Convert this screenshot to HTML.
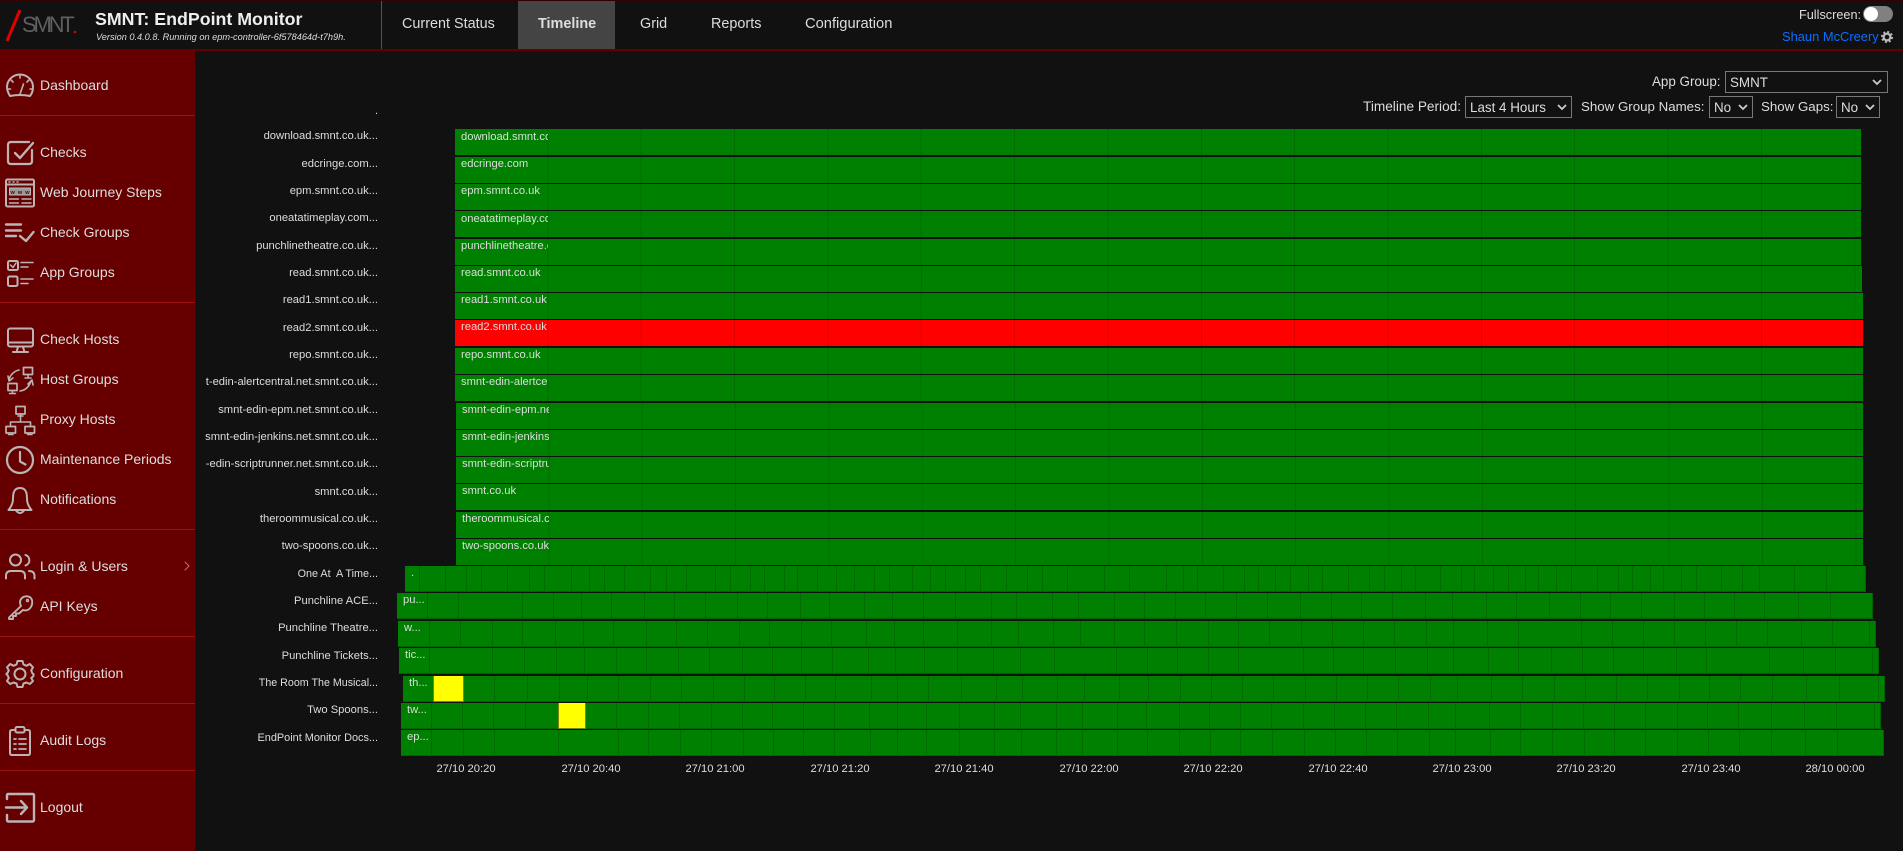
<!DOCTYPE html>
<html lang="en"><head><meta charset="utf-8"><title>SMNT: EndPoint Monitor</title>
<style>
*{box-sizing:border-box}
html,body{margin:0;padding:0;width:1903px;height:851px;overflow:hidden;background:#111;font-family:"Liberation Sans",sans-serif;color:#ddd}
.a{position:absolute;white-space:nowrap}
#hdr{position:absolute;left:0;top:0;width:1903px;height:51px;background:#111;border-top:1px solid #300;border-bottom:2px solid #600}
#side{position:absolute;left:0;top:51px;width:195px;height:800px;background:#600}
.hr{position:absolute;left:0;width:195px;height:1px;background:#9c1212}
.m{position:absolute;left:40px;font-size:14px;line-height:20px;color:#ddd;white-space:nowrap}
.nav{position:absolute;top:14px;font-size:14.4px;line-height:20px;color:#ddd;white-space:nowrap}
.l{position:absolute;left:205px;width:173px;height:16px;overflow:hidden;text-align:right;font-size:11.2px;line-height:16px;color:#ddd;white-space:pre;direction:rtl}
.l span{direction:ltr;unicode-bidi:embed}
.gl{font-size:10.9px}
.r{position:absolute;height:26px;overflow:hidden;background-color:#008000;font-size:11.2px;line-height:16px;color:#ddd;white-space:nowrap}
.t{background-image:repeating-linear-gradient(90deg,#008000 0 92.35px,#006f00 92.35px 93.35px)}
.g{border-right:1px solid #006300;border-bottom:1px solid #006300}
.r b{font-weight:400;position:absolute;left:6px;top:-1px;height:16px;overflow:hidden;display:block}
.y{position:absolute;height:26px;background:#ff0;border:1px solid #7a8a00;border-top:0}
.x{position:absolute;top:761px;width:80px;text-align:center;font-size:11.2px;line-height:16px;color:#ddd}
.lb{position:absolute;font-size:13.3px;line-height:18px;color:#ddd;white-space:nowrap}
select{position:absolute;appearance:none;-webkit-appearance:none;background:#111;color:#ddd;border:1px solid #777;border-radius:0;font:13.4px "Liberation Sans",sans-serif;padding:0 0 0 4px;margin:0}
</style></head><body>

<div id="hdr"></div>
<div class="a" style="left:22px;top:12px;font-size:22px;line-height:26px;color:#5e5e5e;letter-spacing:-3.2px">SMNT</div>
<svg class="a" style="left:0;top:0" width="90" height="50"><line x1="7" y1="41" x2="20" y2="10" stroke="#e00000" stroke-width="3"/><circle cx="75" cy="32" r="1.3" fill="#e00000"/></svg>
<div class="a" style="left:95px;top:8px;font-size:17.8px;line-height:22px;font-weight:700;color:#eee">SMNT: EndPoint Monitor</div>
<div class="a" style="left:96px;top:30px;font-size:9.2px;line-height:14px;font-style:italic;color:#ddd">Version 0.4.0.8. Running on epm-controller-6f578464d-t7h9h.</div>
<div class="a" style="left:381px;top:1px;width:1px;height:48px;background:#555"></div>
<div class="a" style="left:518px;top:1px;width:97px;height:48px;background:#444"></div>
<div class="nav" style="left:402px">Current Status</div>
<div class="nav" style="left:538px;font-weight:700">Timeline</div>
<div class="nav" style="left:640px">Grid</div>
<div class="nav" style="left:711px">Reports</div>
<div class="nav" style="left:805px;font-size:14.7px">Configuration</div>
<div class="a" style="left:1799px;top:7px;font-size:12.7px;line-height:16px;color:#ddd">Fullscreen:</div>
<div class="a" style="left:1863px;top:6px;width:30px;height:16px;border-radius:8px;background:#808080"></div>
<div class="a" style="left:1864px;top:7px;width:14px;height:14px;border-radius:7px;background:#fff"></div>
<div class="a" style="left:1782px;top:28px;font-size:12.9px;line-height:17px;color:#0d6efd">Shaun McCreery</div>
<svg class="a" style="left:1881px;top:31px" width="12" height="12" viewBox="0 0 12 12"><circle cx="6" cy="6" r="3.4" fill="none" stroke="#bbb" stroke-width="2.2"/><circle cx="6" cy="6" r="5" fill="none" stroke="#bbb" stroke-width="2" stroke-dasharray="2 1.93"/></svg>

<div id="side"></div>
<div class="hr" style="top:115px"></div><div class="hr" style="top:302px"></div><div class="hr" style="top:529px"></div><div class="hr" style="top:636px"></div><div class="hr" style="top:703px"></div><div class="hr" style="top:770px"></div>
<div class="m" style="top:75px">Dashboard</div>
<div class="m" style="top:142px">Checks</div>
<div class="m" style="top:182px">Web Journey Steps</div>
<div class="m" style="top:222px">Check Groups</div>
<div class="m" style="top:262px">App Groups</div>
<div class="m" style="top:329px">Check Hosts</div>
<div class="m" style="top:369px">Host Groups</div>
<div class="m" style="top:409px">Proxy Hosts</div>
<div class="m" style="top:449px">Maintenance Periods</div>
<div class="m" style="top:489px">Notifications</div>
<div class="m" style="top:556px">Login &amp; Users</div>
<div class="m" style="top:596px">API Keys</div>
<div class="m" style="top:663px">Configuration</div>
<div class="m" style="top:730px">Audit Logs</div>
<div class="m" style="top:797px">Logout</div>

<svg class="a" style="left:0;top:0" width="195" height="851" fill="none" stroke="#bcb4b4" stroke-width="2" stroke-linecap="round" stroke-linejoin="round">
<path d="M10 96C7.500 92 7 89 7 87A13 12.500 0 0 1 33 87C33 90 32.500 93 30 96Q20 94 10 96Z"/><path d="M20 94L23.500 84M20 75.500V78M11 80L13 82M29 80L27 82M8 89H10.500M30 89H32.500" stroke-width="1.600"/>
<path d="M29 142H11Q8 142 8 145V161Q8 164 11 164H29Q32 164 32 161V150" stroke-width="2.200"/><path d="M15 153L20 158L33 143" stroke-width="2.400"/>
<rect x="6" y="179.500" width="28" height="27" rx="1.500"/><path d="M6 184.500H34" stroke-width="2"/><rect x="9.500" y="188" width="21" height="7" stroke-width="1" fill="#999"/><path d="M9.500 199H18.500M22 199H31M9.500 203H18.500M22 203H31" stroke-width="1.400"/><path d="M9 182H10M13 182H14M17 182H18" stroke-width="1.400"/>
<path d="M6 224.500H21M6 230.500H21M6 236H16" stroke-width="2.400"/><path d="M20 236L26 241L33.500 232" stroke-width="2.400"/>
<rect x="8" y="261" width="10" height="9" rx="1.500"/><path d="M10.500 265L13 267.500L16 263" stroke-width="1.500"/><path d="M21 262.500H33M21 267H28M21 279H33M21 283.500H28" stroke-width="1.600"/><rect x="8" y="276.500" width="9.500" height="9.500" rx="1.500"/>
<rect x="8" y="328.500" width="25" height="18" rx="2"/><path d="M8 342.500H33M18 347L16.500 352M23 347L24.500 352M13 352H28"/>
<rect x="23.500" y="367.500" width="9" height="7" stroke-width="1.700"/><path d="M28 375V378M25 378H31" stroke-width="1.500"/><rect x="8" y="383.500" width="9" height="7" stroke-width="1.700"/><path d="M12.500 391V393.500M9.500 393.500H15.500" stroke-width="1.500"/><path d="M9 380Q11 372 19 370M8 376L9 381L13 378M20 391Q28 390 31 381M28 384L32 380L33 385" stroke-width="1.600"/>
<rect x="16" y="406.500" width="9" height="7.500" stroke-width="1.700"/><path d="M20.500 414V422M10.500 426V422H30.500V426M18 416H23" stroke-width="1.600"/><rect x="6" y="426.500" width="9.500" height="6.500" stroke-width="1.700"/><rect x="25" y="426.500" width="9.500" height="6.500" stroke-width="1.700"/><path d="M8.500 434.500H13M27.500 434.500H32" stroke-width="1.500"/>
<circle cx="20" cy="460" r="13" stroke-width="2.200"/><path d="M20 452V461.500L25.500 464.500" stroke-width="2.200"/>
<path d="M20 488C13 488 13 495 13 499C13 504 11 507 8.500 510H31.500C29 507 27 504 27 499C27 495 27 488 20 488Z"/><path d="M16 510.500Q20 515.500 24 510.500"/>
<circle cx="15.500" cy="560" r="5.500"/><path d="M25.500 555A5.500 5.500 0 0 1 25.500 565.500M6 578.500V576Q6 571 11 571H20Q25 571 25 576V578.500M29 571Q34.500 571 34.500 576V578.500"/>
<path d="M21 606L9 617.500V619H13V616H16V613.500H19L23 610C30 612 33 605 32 600C30.500 595.500 24 595 21 599C19.500 601.500 20 604 21 606Z" stroke-width="1.900"/><circle cx="27.500" cy="600.500" r="1" stroke-width="1.400"/>
<circle cx="20" cy="674" r="5.500"/><path d="M17.500 661H22.500L23.500 664.500L26.500 665.800L29.800 664L33 667.300L31.200 670.500L32.500 673.500L33.500 674V676L32.500 677L31.200 678L33 681L29.800 684L26.500 682.500L23.500 683.500L22.500 687H17.500L16.500 683.500L13.500 682.500L10.200 684L7 681L8.800 678L7.500 675L6.500 674.500V673.500L7.500 673L8.800 670.500L7 667.300L10.200 664L13.500 665.800L16.500 664.500Z"/>
<path d="M15 730H12Q10 730 10 732V753Q10 755 12 755H28Q30 755 30 753V732Q30 730 28 730H25"/><rect x="15.500" y="727" width="9" height="5.500" rx="1.500"/><path d="M14 739H16M19 739H26M14 744H16M19 744H26M14 749H16M19 749H26" stroke-width="1.700"/>
<path d="M7 799V795.500Q7 794 8.500 794H32.500Q34 794 34 795.500V820Q34 821.500 32.500 821.500H8.500Q7 821.500 7 820V815" stroke-width="2.400"/><path d="M6 807.500H26M21 801L27 807.500L21 814" stroke-width="2.400"/>
<path d="M185 562L189 566L185 570" stroke="#c07070" stroke-width="1"/>
</svg>
<svg class="a" style="left:0;top:0" width="195" height="210"><text x="10.500" y="194" font-family="Liberation Sans" font-size="5.500" font-weight="700" fill="#500" textLength="19">www</text></svg>

<div class="lb" style="left:1652px;top:73px;font-size:13.4px">App Group:</div>
<select style="left:1725px;top:71px;width:163px;height:22px"><option>SMNT</option></select>
<div class="lb" style="left:1363px;top:98px;font-size:13.65px">Timeline Period:</div>
<select style="left:1465px;top:96px;width:107px;height:22px"><option>Last 4 Hours</option></select>
<div class="lb" style="left:1581px;top:98px">Show Group Names:</div>
<select style="left:1709px;top:96px;width:44px;height:22px"><option>No</option></select>
<div class="lb" style="left:1761px;top:98px">Show Gaps:</div>
<select style="left:1836px;top:96px;width:44px;height:22px"><option>No</option></select>
<svg class="a" style="left:0;top:0;pointer-events:none" width="1903" height="130" fill="none" stroke="#ccc" stroke-width="1.800"><path d="M1873 80L1877 84L1881 80M1558 105L1562 109L1566 105M1739 105L1743 109L1747 105M1866 105L1870 109L1874 105"/></svg>

<div class="a" style="left:375px;top:104px;font-size:11px;line-height:14px">.</div>
<div class="l" style="top:128px"><span>download.smnt.co.uk...</span></div>
<div class="l" style="top:156px"><span>edcringe.com...</span></div>
<div class="l" style="top:183px"><span>epm.smnt.co.uk...</span></div>
<div class="l" style="top:210px"><span>oneatatimeplay.com...</span></div>
<div class="l" style="top:238px"><span>punchlinetheatre.co.uk...</span></div>
<div class="l" style="top:265px"><span>read.smnt.co.uk...</span></div>
<div class="l" style="top:292px"><span>read1.smnt.co.uk...</span></div>
<div class="l" style="top:320px"><span>read2.smnt.co.uk...</span></div>
<div class="l" style="top:347px"><span>repo.smnt.co.uk...</span></div>
<div class="l" style="top:374px"><span>t-edin-alertcentral.net.smnt.co.uk...</span></div>
<div class="l" style="top:402px"><span>smnt-edin-epm.net.smnt.co.uk...</span></div>
<div class="l" style="top:429px"><span>smnt-edin-jenkins.net.smnt.co.uk...</span></div>
<div class="l" style="top:456px"><span>:-edin-scriptrunner.net.smnt.co.uk...</span></div>
<div class="l" style="top:484px"><span>smnt.co.uk...</span></div>
<div class="l" style="top:511px"><span>theroommusical.co.uk...</span></div>
<div class="l" style="top:538px"><span>two-spoons.co.uk...</span></div>
<div class="l" style="top:566px;font-size:10.8px"><span>One At  A Time...</span></div>
<div class="l" style="top:593px"><span>Punchline ACE...</span></div>
<div class="l" style="top:620px"><span>Punchline Theatre...</span></div>
<div class="l" style="top:648px"><span>Punchline Tickets...</span></div>
<div class="l gl" style="top:675px;font-size:10.7px"><span>The Room The Musical...</span></div>
<div class="l" style="top:702px"><span>Two Spoons...</span></div>
<div class="l gl" style="top:730px"><span>EndPoint Monitor Docs...</span></div>

<div class="r t" style="left:455px;top:129px;width:1406px"><b style="width:87px;top:0">download.smnt.co.uk</b></div>
<div class="r t" style="left:455px;top:157px;width:1406px"><b style="width:87px">edcringe.com</b></div>
<div class="r t" style="left:455px;top:184px;width:1406px"><b style="width:87px">epm.smnt.co.uk</b></div>
<div class="r t" style="left:455px;top:211px;width:1406px"><b style="width:87px;top:0">oneatatimeplay.com</b></div>
<div class="r t" style="left:455px;top:239px;width:1406px"><b style="width:87px">punchlinetheatre.co.uk</b></div>
<div class="r t" style="left:455px;top:266px;width:1407px"><b style="width:87px">read.smnt.co.uk</b></div>
<div class="r t" style="left:455px;top:293px;width:1408px"><b style="width:87px">read1.smnt.co.uk</b></div>
<div class="r" style="left:455px;top:320px;width:1408px;background-image:repeating-linear-gradient(90deg,#f00 0 92.35px,#e00000 92.35px 93.35px);background-color:#f00"><b style="width:87px">read2.smnt.co.uk</b></div>
<div class="r t" style="left:455px;top:348px;width:1408px"><b style="width:87px">repo.smnt.co.uk</b></div>
<div class="r t" style="left:455px;top:375px;width:1408px"><b style="width:87px">smnt-edin-alertcentral</b></div>
<div class="r t" style="left:456px;top:403px;width:1407px"><b style="width:87px">smnt-edin-epm.net</b></div>
<div class="r t" style="left:456px;top:430px;width:1407px"><b style="width:87px">smnt-edin-jenkins.net</b></div>
<div class="r t" style="left:456px;top:457px;width:1407px"><b style="width:87px">smnt-edin-scriptrunner</b></div>
<div class="r t" style="left:456px;top:484px;width:1407px"><b style="width:87px">smnt.co.uk</b></div>
<div class="r t" style="left:456px;top:512px;width:1407px"><b style="width:87px">theroommusical.co.uk</b></div>
<div class="r t" style="left:456px;top:539px;width:1407px"><b style="width:87px">two-spoons.co.uk</b></div>
<div class="r g" style="left:405px;top:566px;width:1461px"><b style="width:10px">.</b></div>
<div class="r g" style="left:397px;top:593px;width:1476px"><b style="width:22px">pu...</b></div>
<div class="r g" style="left:398px;top:621px;width:1478px"><b style="width:22px">w...</b></div>
<div class="r g" style="left:399px;top:648px;width:1480px"><b style="width:22px">tic...</b></div>
<div class="r g" style="left:403px;top:676px;width:1482px"><b style="width:22px">th...</b></div>
<div class="r g" style="left:401px;top:703px;width:1480px"><b style="width:22px">tw...</b></div>
<div class="r g" style="left:401px;top:730px;width:1483px"><b style="width:22px">ep...</b></div>

<svg class="a" style="left:0;top:0;pointer-events:none" width="1903" height="851" fill="none" stroke="#006c00" stroke-width="1">
<g transform="translate(0.5 566)"><path d="M419 0v26M445 0v26M466 0v26M481 0v26M507 0v26M529 0v26M544 0v26M571 0v26M589 0v26M604 0v26M624 0v26M650 0v26M666 0v26M686 0v26M715 0v26M730 0v26M750 0v26M764 0v26M784 0v26M797 0v26M817 0v26M836 0v26M854 0v26M874 0v26M889 0v26M912 0v26M930 0v26M945 0v26M965 0v26M980 0v26M1006 0v26M1027 0v26M1042 0v26M1067 0v26M1104 0v26M1129 0v26M1166 0v26M1183 0v26M1197 0v26M1223 0v26M1244 0v26M1258 0v26M1275 0v26M1290 0v26M1308 0v26M1322 0v26M1348 0v26M1369 0v26M1384 0v26M1401 0v26M1415 0v26M1440 0v26M1461 0v26M1474 0v26M1493 0v26M1508 0v26M1525 0v26M1538 0v26M1556 0v26M1571 0v26M1597 0v26M1618 0v26M1632 0v26M1650 0v26M1663 0v26M1681 0v26M1696 0v26M1721 0v26M1742 0v26M1759 0v26M1794 0v26M1826 0v26"/></g>
<g transform="translate(0.5 593)"><path d="M427 0v26M458 0v26M522 0v26M553 0v26M581 0v26M611 0v26M644 0v26M674 0v26M705 0v26M737 0v26M767 0v26M800 0v26M829 0v26M864 0v26M892 0v26M923 0v26M955 0v26M991 0v26M1016 0v26M1052 0v26M1078 0v26M1114 0v26M1144 0v26M1175 0v26M1205 0v26M1236 0v26M1267 0v26M1300 0v26M1331 0v26M1361 0v26M1392 0v26M1425 0v26M1452 0v26M1486 0v26M1516 0v26M1549 0v26M1580 0v26M1610 0v26M1641 0v26M1674 0v26M1704 0v26M1734 0v26M1764 0v26M1798 0v26M1830 0v26"/></g>
<g transform="translate(0.5 621)"><path d="M429 0v26M460 0v26M492 0v26M522 0v26M555 0v26M583 0v26M613 0v26M646 0v26M676 0v26M707 0v26M739 0v26M769 0v26M801 0v26M831 0v26M866 0v26M894 0v26M923 0v26M957 0v26M991 0v26M1018 0v26M1053 0v26M1080 0v26M1114 0v26M1144 0v26M1176 0v26M1208 0v26M1238 0v26M1269 0v26M1301 0v26M1332 0v26M1363 0v26M1394 0v26M1426 0v26M1453 0v26M1487 0v26M1518 0v26M1581 0v26M1612 0v26M1643 0v26M1674 0v26M1705 0v26M1736 0v26M1767 0v26M1801 0v26M1832 0v26M1869 0v26"/></g>
<g transform="translate(0.5 648)"><path d="M429 0v26M492 0v26M524 0v26M556 0v26M584 0v26M616 0v26M646 0v26M678 0v26M709 0v26M742 0v26M772 0v26M801 0v26M832 0v26M868 0v26M895 0v26M924 0v26M957 0v26M993 0v26M1020 0v26M1054 0v26M1116 0v26M1147 0v26M1177 0v26M1208 0v26M1238 0v26M1303 0v26M1333 0v26M1363 0v26M1395 0v26M1427 0v26M1453 0v26M1488 0v26M1518 0v26M1551 0v26M1582 0v26M1613 0v26M1643 0v26M1676 0v26M1706 0v26M1769 0v26M1803 0v26M1835 0v26M1872 0v26"/></g>
<g transform="translate(0.5 676)"><path d="M494 0v26M527 0v26M559 0v26M587 0v26M618 0v26M650 0v26M681 0v26M713 0v26M744 0v26M774 0v26M805 0v26M835 0v26M871 0v26M897 0v26M928 0v26M961 0v26M996 0v26M1022 0v26M1057 0v26M1084 0v26M1119 0v26M1148 0v26M1180 0v26M1211 0v26M1242 0v26M1273 0v26M1305 0v26M1336 0v26M1367 0v26M1398 0v26M1430 0v26M1457 0v26M1491 0v26M1522 0v26M1554 0v26M1585 0v26M1616 0v26M1647 0v26M1679 0v26M1709 0v26M1740 0v26M1772 0v26M1806 0v26M1839 0v26M1878 0v26"/></g>
<g transform="translate(0.5 703)"><path d="M431 0v26M462 0v26M493 0v26M525 0v26M616 0v26M648 0v26M679 0v26M711 0v26M742 0v26M772 0v26M803 0v26M834 0v26M869 0v26M897 0v26M926 0v26M959 0v26M994 0v26M1020 0v26M1056 0v26M1082 0v26M1117 0v26M1146 0v26M1179 0v26M1209 0v26M1240 0v26M1271 0v26M1303 0v26M1334 0v26M1365 0v26M1396 0v26M1428 0v26M1455 0v26M1489 0v26M1520 0v26M1552 0v26M1583 0v26M1614 0v26M1645 0v26M1677 0v26M1707 0v26M1738 0v26M1771 0v26M1804 0v26M1836 0v26M1874 0v26"/></g>
<g transform="translate(0.5 730)"><path d="M431 0v26M463 0v26M494 0v26M558 0v26M618 0v26M648 0v26M680 0v26M711 0v26M743 0v26M773 0v26M803 0v26M834 0v26M870 0v26M897 0v26M926 0v26M959 0v26M994 0v26M1021 0v26M1056 0v26M1082 0v26M1117 0v26M1147 0v26M1179 0v26M1210 0v26M1240 0v26M1272 0v26M1304 0v26M1335 0v26M1366 0v26M1397 0v26M1429 0v26M1455 0v26M1490 0v26M1520 0v26M1552 0v26M1584 0v26M1614 0v26M1645 0v26M1677 0v26M1708 0v26M1739 0v26M1771 0v26M1805 0v26M1837 0v26"/></g>
</svg>
<div class="y" style="left:433px;top:676px;width:31px"></div>
<div class="y" style="left:558px;top:703px;width:28px"></div>

<div class="x" style="left:426px">27/10 20:20</div>
<div class="x" style="left:551px">27/10 20:40</div>
<div class="x" style="left:675px">27/10 21:00</div>
<div class="x" style="left:800px">27/10 21:20</div>
<div class="x" style="left:924px">27/10 21:40</div>
<div class="x" style="left:1049px">27/10 22:00</div>
<div class="x" style="left:1173px">27/10 22:20</div>
<div class="x" style="left:1298px">27/10 22:40</div>
<div class="x" style="left:1422px">27/10 23:00</div>
<div class="x" style="left:1546px">27/10 23:20</div>
<div class="x" style="left:1671px">27/10 23:40</div>
<div class="x" style="left:1795px">28/10 00:00</div>
</body></html>
